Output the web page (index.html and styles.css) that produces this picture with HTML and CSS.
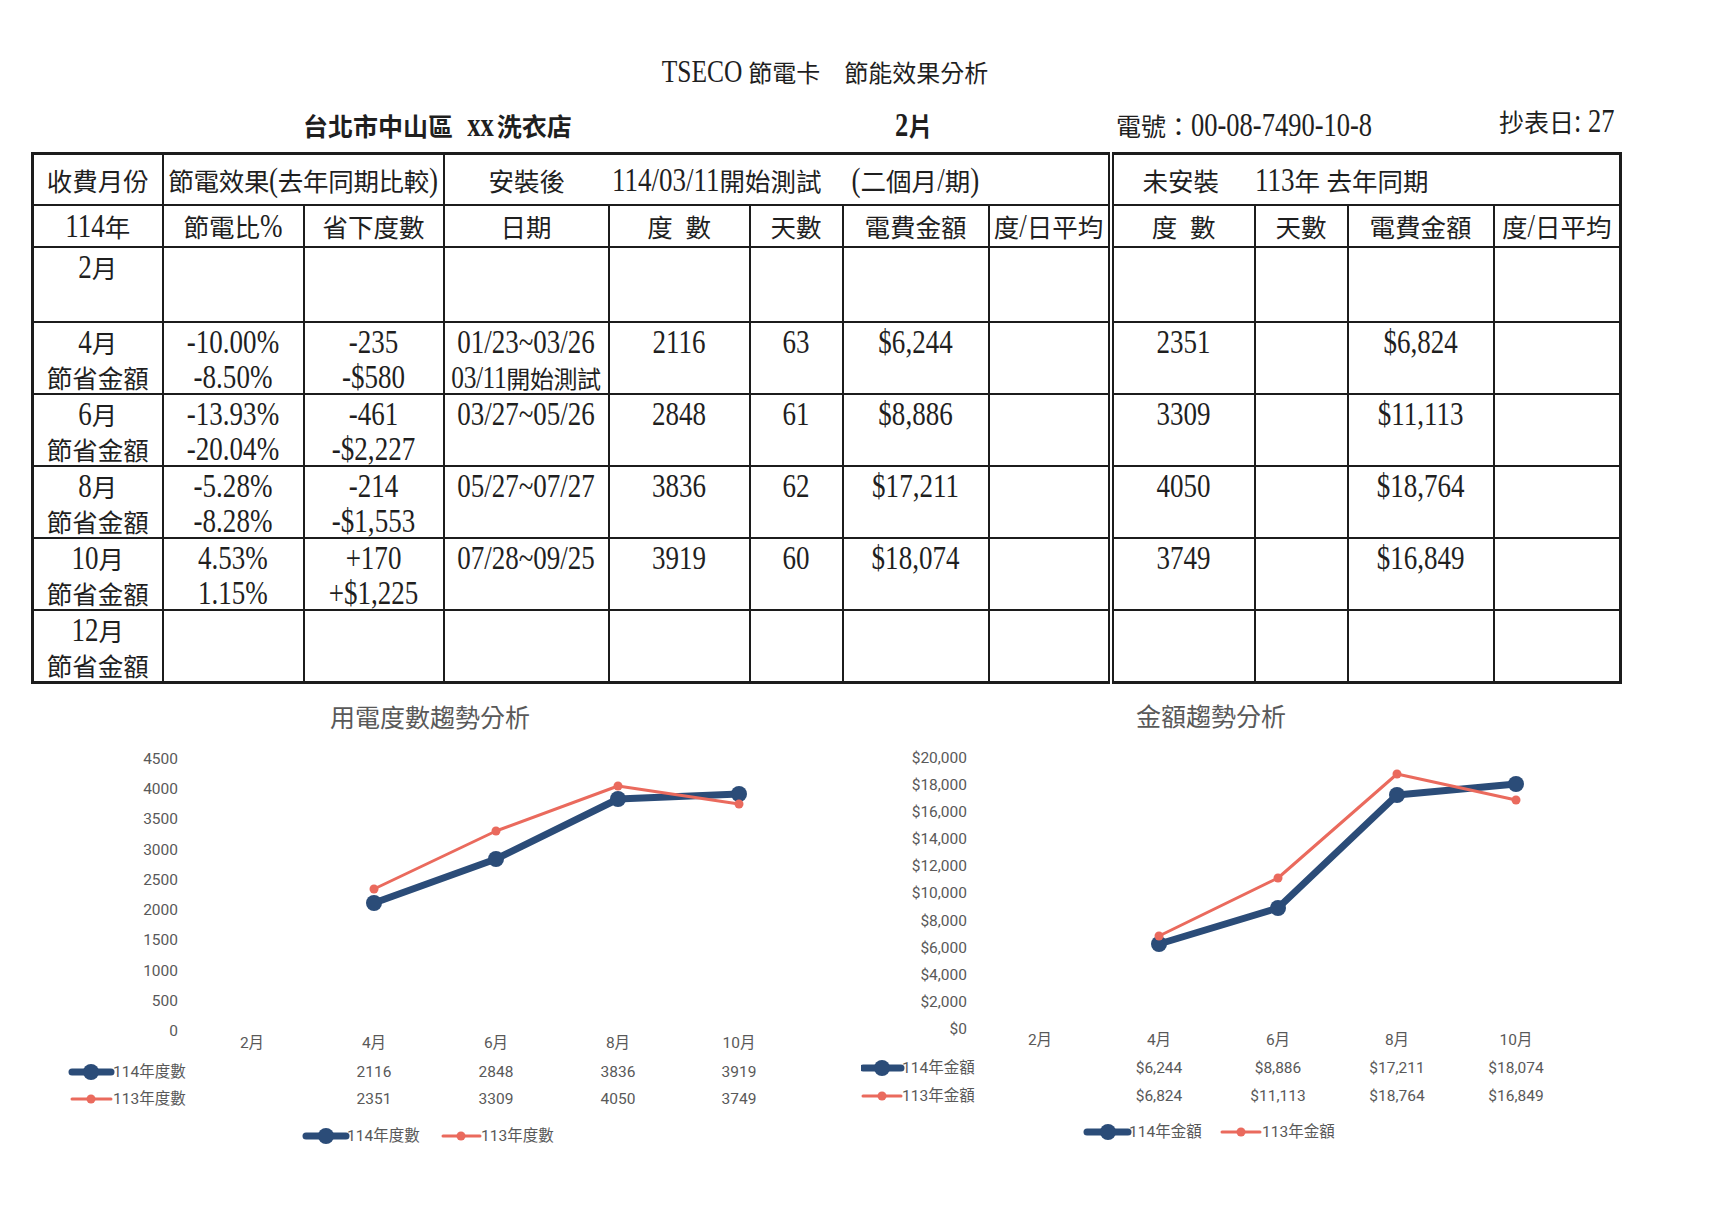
FILE: index.html
```html
<!DOCTYPE html>
<html lang="zh-Hant">
<head>
<meta charset="utf-8">
<title>TSECO 節電卡 節能效果分析</title>
<link rel="stylesheet" href="styles.css">
</head>
<body>
<div class="page">
  <h1 class="title"><span class="n">TSECO</span> 節電卡　節能效果分析</h1>
  <div class="info">
    <div class="info-shop">台北市中山區 <span class="n xx">xx</span>洗衣店</div>
    <div class="info-qty"><span class="n">2</span>片</div>
    <div class="info-no">電號：<span class="n">00-08-7490-10-8</span></div>
    <div class="info-date">抄表日<span class="n">: 27</span></div>
  </div>

  <table class="sheet">
    <colgroup>
      <col class="c1"><col class="c2"><col class="c3"><col class="c4"><col class="c5"><col class="c6">
      <col class="c7"><col class="c8"><col class="c9"><col class="c10"><col class="c11"><col class="c12">
    </colgroup>
    <tr class="r-head1">
      <td>收費月份</td>
      <td colspan="2" class="tight">節電效果<span class="n">(</span>去年同期比較<span class="n">)</span></td>
      <td colspan="5" class="left"><span class="seg1">安裝後</span><span class="seg2"><span class="n">114/03/11</span>開始測試</span><span class="seg3"><span class="n">(</span>二個月<span class="n">/</span>期<span class="n">)</span></span></td>
      <td colspan="4" class="left split"><span class="seg4">未安裝</span><span class="seg5"><span class="n">113</span>年 去年同期</span></td>
    </tr>
    <tr class="r-head2">
      <td><span class="n">114</span>年</td>
      <td>節電比<span class="n">%</span></td>
      <td>省下度數</td>
      <td>日期</td>
      <td>度&ensp;數</td>
      <td>天數</td>
      <td>電費金額</td>
      <td>度<span class="n">/</span>日平均</td>
      <td class="split">度&ensp;數</td>
      <td>天數</td>
      <td>電費金額</td>
      <td>度<span class="n">/</span>日平均</td>
    </tr>
    <tr class="r-data r-first">
      <td><div class="ln"><span class="n">2</span>月</div></td>
      <td></td><td></td><td></td><td></td><td></td><td></td><td></td>
      <td class="split"></td><td></td><td></td><td></td>
    </tr>
    <tr class="r-data">
      <td><div class="ln"><span class="n">4</span>月</div><div class="ln">節省金額</div></td>
      <td><div class="ln"><span class="n">-10.00%</span></div><div class="ln"><span class="n">-8.50%</span></div></td>
      <td><div class="ln"><span class="n">-235</span></div><div class="ln"><span class="n">-$580</span></div></td>
      <td><div class="ln"><span class="n">01/23~03/26</span></div><div class="ln tight"><span class="n">03/11</span>開始測試</div></td>
      <td><div class="ln"><span class="n">2116</span></div></td>
      <td><div class="ln"><span class="n">63</span></div></td>
      <td><div class="ln"><span class="n">$6,244</span></div></td>
      <td></td>
      <td class="split"><div class="ln"><span class="n">2351</span></div></td>
      <td></td>
      <td><div class="ln"><span class="n">$6,824</span></div></td>
      <td></td>
    </tr>
    <tr class="r-data">
      <td><div class="ln"><span class="n">6</span>月</div><div class="ln">節省金額</div></td>
      <td><div class="ln"><span class="n">-13.93%</span></div><div class="ln"><span class="n">-20.04%</span></div></td>
      <td><div class="ln"><span class="n">-461</span></div><div class="ln"><span class="n">-$2,227</span></div></td>
      <td><div class="ln"><span class="n">03/27~05/26</span></div></td>
      <td><div class="ln"><span class="n">2848</span></div></td>
      <td><div class="ln"><span class="n">61</span></div></td>
      <td><div class="ln"><span class="n">$8,886</span></div></td>
      <td></td>
      <td class="split"><div class="ln"><span class="n">3309</span></div></td>
      <td></td>
      <td><div class="ln"><span class="n">$11,113</span></div></td>
      <td></td>
    </tr>
    <tr class="r-data">
      <td><div class="ln"><span class="n">8</span>月</div><div class="ln">節省金額</div></td>
      <td><div class="ln"><span class="n">-5.28%</span></div><div class="ln"><span class="n">-8.28%</span></div></td>
      <td><div class="ln"><span class="n">-214</span></div><div class="ln"><span class="n">-$1,553</span></div></td>
      <td><div class="ln"><span class="n">05/27~07/27</span></div></td>
      <td><div class="ln"><span class="n">3836</span></div></td>
      <td><div class="ln"><span class="n">62</span></div></td>
      <td><div class="ln"><span class="n">$17,211</span></div></td>
      <td></td>
      <td class="split"><div class="ln"><span class="n">4050</span></div></td>
      <td></td>
      <td><div class="ln"><span class="n">$18,764</span></div></td>
      <td></td>
    </tr>
    <tr class="r-data">
      <td><div class="ln"><span class="n">10</span>月</div><div class="ln">節省金額</div></td>
      <td><div class="ln"><span class="n">4.53%</span></div><div class="ln"><span class="n">1.15%</span></div></td>
      <td><div class="ln"><span class="n">+170</span></div><div class="ln"><span class="n">+$1,225</span></div></td>
      <td><div class="ln"><span class="n">07/28~09/25</span></div></td>
      <td><div class="ln"><span class="n">3919</span></div></td>
      <td><div class="ln"><span class="n">60</span></div></td>
      <td><div class="ln"><span class="n">$18,074</span></div></td>
      <td></td>
      <td class="split"><div class="ln"><span class="n">3749</span></div></td>
      <td></td>
      <td><div class="ln"><span class="n">$16,849</span></div></td>
      <td></td>
    </tr>
    <tr class="r-data r-last">
      <td><div class="ln"><span class="n">12</span>月</div><div class="ln">節省金額</div></td>
      <td></td><td></td><td></td><td></td><td></td><td></td><td></td>
      <td class="split"></td><td></td><td></td><td></td>
    </tr>
  </table>

  <div class="charts">
    <svg class="chart" width="861" height="480" viewBox="0 0 861 480">
      <text class="ctitle" x="430" y="36" text-anchor="middle">用電度數趨勢分析</text>
      <g class="ax" text-anchor="end">
        <text x="178" y="345">0</text>
        <text x="178" y="315">500</text>
        <text x="178" y="285">1000</text>
        <text x="178" y="254">1500</text>
        <text x="178" y="224">2000</text>
        <text x="178" y="194">2500</text>
        <text x="178" y="164">3000</text>
        <text x="178" y="133">3500</text>
        <text x="178" y="103">4000</text>
        <text x="178" y="73">4500</text>
      </g>
      <g class="ax" text-anchor="middle">
        <text x="252" y="357">2月</text>
        <text x="374" y="357">4月</text>
        <text x="496" y="357">6月</text>
        <text x="618" y="357">8月</text>
        <text x="739" y="357">10月</text>
        <text x="374" y="386">2116</text>
        <text x="496" y="386">2848</text>
        <text x="618" y="386">3836</text>
        <text x="739" y="386">3919</text>
        <text x="374" y="413">2351</text>
        <text x="496" y="413">3309</text>
        <text x="618" y="413">4050</text>
        <text x="739" y="413">3749</text>
      </g>
      <polyline class="s114" points="374,212 496,168 618,108 739,103"/>
      <g class="m114"><circle cx="374" cy="212" r="8"/><circle cx="496" cy="168" r="8"/><circle cx="618" cy="108" r="8"/><circle cx="739" cy="103" r="8"/></g>
      <polyline class="s113" points="374,198 496,140 618,95 739,113"/>
      <g class="m113"><circle cx="374" cy="198" r="4.5"/><circle cx="496" cy="140" r="4.5"/><circle cx="618" cy="95" r="4.5"/><circle cx="739" cy="113" r="4.5"/></g>
      <line class="s114" x1="72" y1="381" x2="111" y2="381"/><circle class="m114" cx="91" cy="381" r="8"/>
      <text class="ax" x="113" y="386">114年度數</text>
      <line class="s113" x1="72" y1="408" x2="111" y2="408"/><circle class="m113" cx="91" cy="408" r="4.5"/>
      <text class="ax" x="113" y="413">113年度數</text>
      <line class="s114" x1="306" y1="445" x2="346" y2="445"/><circle class="m114" cx="326" cy="445" r="8"/>
      <text class="ax" x="347" y="450">114年度數</text>
      <line class="s113" x1="443" y1="445" x2="480" y2="445"/><circle class="m113" cx="461" cy="445" r="4.5"/>
      <text class="ax" x="481" y="450">113年度數</text>
    </svg>

    <svg class="chart" width="861" height="480" viewBox="0 0 861 480">
      <text class="ctitle" x="350" y="35" text-anchor="middle">金額趨勢分析</text>
      <g class="ax" text-anchor="end">
        <text x="106" y="343">$0</text>
        <text x="106" y="316">$2,000</text>
        <text x="106" y="289">$4,000</text>
        <text x="106" y="262">$6,000</text>
        <text x="106" y="235">$8,000</text>
        <text x="106" y="207">$10,000</text>
        <text x="106" y="180">$12,000</text>
        <text x="106" y="153">$14,000</text>
        <text x="106" y="126">$16,000</text>
        <text x="106" y="99">$18,000</text>
        <text x="106" y="72">$20,000</text>
      </g>
      <g class="ax" text-anchor="middle">
        <text x="179" y="354">2月</text>
        <text x="298" y="354">4月</text>
        <text x="417" y="354">6月</text>
        <text x="536" y="354">8月</text>
        <text x="655" y="354">10月</text>
        <text x="298" y="382">$6,244</text>
        <text x="417" y="382">$8,886</text>
        <text x="536" y="382">$17,211</text>
        <text x="655" y="382">$18,074</text>
        <text x="298" y="410">$6,824</text>
        <text x="417" y="410">$11,113</text>
        <text x="536" y="410">$18,764</text>
        <text x="655" y="410">$16,849</text>
      </g>
      <polyline class="s114" points="298,253 417,217 536,104 655,93"/>
      <g class="m114"><circle cx="298" cy="253" r="8"/><circle cx="417" cy="217" r="8"/><circle cx="536" cy="104" r="8"/><circle cx="655" cy="93" r="8"/></g>
      <polyline class="s113" points="298,245 417,187 536,83 655,109"/>
      <g class="m113"><circle cx="298" cy="245" r="4.5"/><circle cx="417" cy="187" r="4.5"/><circle cx="536" cy="83" r="4.5"/><circle cx="655" cy="109" r="4.5"/></g>
      <line class="s114" x1="2" y1="377" x2="40" y2="377"/><circle class="m114" cx="21" cy="377" r="8"/>
      <text class="ax" x="41" y="382">114年金額</text>
      <line class="s113" x1="2" y1="405" x2="40" y2="405"/><circle class="m113" cx="21" cy="405" r="4.5"/>
      <text class="ax" x="41" y="410">113年金額</text>
      <line class="s114" x1="226" y1="441" x2="267" y2="441"/><circle class="m114" cx="247" cy="441" r="8"/>
      <text class="ax" x="268" y="446">114年金額</text>
      <line class="s113" x1="361" y1="441" x2="399" y2="441"/><circle class="m113" cx="380" cy="441" r="4.5"/>
      <text class="ax" x="401" y="446">113年金額</text>
    </svg>
  </div>
</div>
</body>
</html>
```

FILE: styles.css
```css
html, body {
  margin: 0;
  padding: 0;
  background: #ffffff;
}

body {
  font-family: "Liberation Serif", "Noto Sans CJK TC", serif;
  color: #1f1f1f;
}

.page {
  width: 1722px;
  height: 1218px;
  padding-top: 59px;
  box-sizing: border-box;
}

/* tall, narrow latin glyphs as in the scanned form */
.n {
  display: inline-block;
  font-family: "Liberation Serif", serif;
  font-size: 1.06em;
  line-height: 1;
  transform: scaleY(1.27);
  transform-origin: 50% 84%;
}

.title {
  margin: 0;
  width: 1650px;
  text-align: center;
  font-size: 24px;
  font-weight: normal;
  line-height: 30px;
}

.info {
  display: flex;
  margin-top: 23px;
  padding-left: 303px;
  font-size: 25px;
  line-height: 32px;
}

.info-shop {
  width: 592px;
  font-weight: bold;
}

.info-shop .xx {
  margin-left: 8px;
  margin-right: 3px;
}

.info-qty {
  width: 221px;
  font-weight: bold;
}

.info-no {
  width: 383px;
}

.info-date {
  margin-top: -4px;
}

.sheet {
  margin-top: 8px;
  margin-left: 31px;
  width: 1588px;
  table-layout: fixed;
  border-collapse: collapse;
  border: 3px solid #1c1c1c;
  font-size: 25.5px;
}

.c1 { width: 130px; }
.c2 { width: 141px; }
.c3 { width: 140px; }
.c4 { width: 165px; }
.c5 { width: 141px; }
.c6 { width: 93px; }
.c7 { width: 146px; }
.c8 { width: 122px; }
.c9 { width: 144px; }
.c10 { width: 93px; }
.c11 { width: 146px; }
.c12 { width: 127px; }

.sheet td {
  border: 2px solid #1c1c1c;
  padding: 0;
  text-align: center;
  white-space: nowrap;
  overflow: visible;
}

.sheet td.split {
  border-left: 6px double #1c1c1c;
}

.r-head1 {
  height: 51px;
}

.r-head2 {
  height: 42px;
}

.sheet td.left {
  text-align: left;
}

.sheet td.tight {
  letter-spacing: -0.3px;
}

.seg1 { margin-left: 44px; }
.seg2 { margin-left: 47px; }
.seg3 { margin-left: 30px; }
.seg4 { margin-left: 29px; }
.seg5 { margin-left: 36px; }

.r-data {
  height: 72px;
}

.r-first {
  height: 75px;
}

.r-last {
  height: 73px;
}

.r-data td {
  vertical-align: top;
  padding-top: 0;
}

.ln {
  display: block;
  text-align: center;
  white-space: nowrap;
  line-height: 44px;
  height: 35px;
}

.ln.tight {
  font-size: 24px;
  letter-spacing: -0.4px;
}

.charts {
  display: flex;
  margin-top: 7px;
}

.chart {
  display: block;
  flex: none;
}

.ctitle {
  font-family: "Noto Sans CJK TC", sans-serif;
  font-size: 25px;
  fill: #595959;
}

.ax {
  font-family: Roboto, "Noto Sans CJK TC", sans-serif;
  font-size: 15.5px;
  fill: #595959;
}

.s114 {
  fill: none;
  stroke: #2b4c78;
  stroke-width: 7;
  stroke-linejoin: round;
  stroke-linecap: round;
}

.m114, .m114 circle {
  fill: #2b4c78;
}

.s113 {
  fill: none;
  stroke: #ea6a5d;
  stroke-width: 3;
  stroke-linejoin: round;
  stroke-linecap: round;
}

.m113, .m113 circle {
  fill: #ea6a5d;
}
```
